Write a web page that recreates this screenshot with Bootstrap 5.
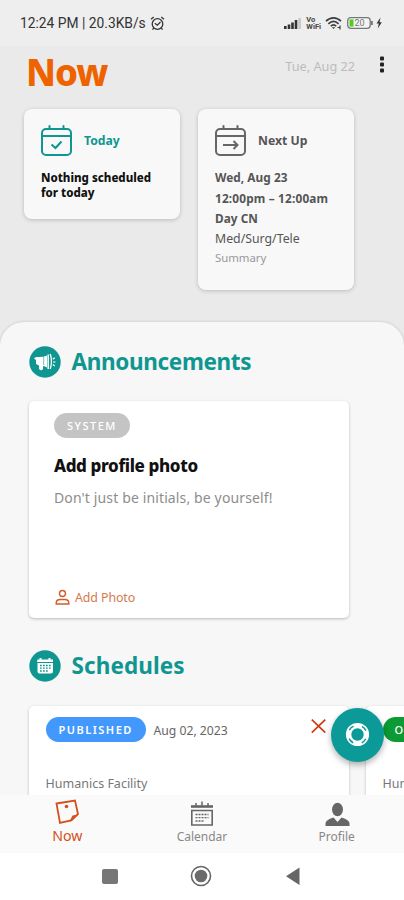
<!DOCTYPE html>
<html lang="en">
<head>
<meta charset="utf-8">
<meta name="viewport" content="width=device-width, initial-scale=1">
<title>Now</title>
<link rel="stylesheet" href="https://cdn.jsdelivr.net/npm/bootstrap@5.3.0/dist/css/bootstrap.min.css">
<style>
:root{--teal:#0f9691;--orange:#d4511c}
body{margin:0;background:#eaeaea;font-family:"Noto Sans","Open Sans",sans-serif;color:#111}
svg{display:block;flex:none}
.screen{height:900px;overflow:hidden}
.statusbar{height:46px;padding:0 20px;background:#eeeeee;font:13.8px/46px Roboto,sans-serif;color:#333}
.vowifi{font:bold 7.5px/7.5px Roboto,sans-serif;color:#444}
.topbar{height:63px;padding:0 15px 0 26px}
.page-name{font-size:36.5px;line-height:53px;font-weight:800;color:#ee6300;letter-spacing:-1px}
.date{font-size:12.7px;line-height:40px;color:#bcbcbc}
.menu-dots{margin:0 2px 0 22px}
.agenda{height:213px;padding:0 24px;gap:18px}
.tile{width:156px;background:#f8f8f8;border-radius:8px;box-shadow:0 1px 4px rgba(0,0,0,.2);padding:15px 0 0 17px}
.tile-today{height:110px}
.tile-next{height:181px;color:#555}
.tile-label{font-size:12.2px;font-weight:700;padding-top:2px}
.tile-text{font-size:11.5px;font-weight:800;line-height:15px;margin-top:13px}
.shift{font-size:11.8px;line-height:20.5px;font-weight:700;margin-top:10px;letter-spacing:.05px}
.shift .hours{letter-spacing:.18px}
.shift .unit{font-weight:400;line-height:20px;font-size:12.3px;letter-spacing:0}
.shift .note{font-weight:400;line-height:17px;color:#999;font-size:11.4px;letter-spacing:-.05px}
.teal{color:var(--teal)}
.sheet{height:473px;background:#f7f7f7;border-radius:24px 24px 0 0;box-shadow:0 0 3px rgba(0,0,0,.18);padding:24px 0 0 29px;overflow:hidden}
.section-name{font-size:22.5px;font-weight:700;line-height:32px;color:var(--teal);margin:0 0 0 10.5px;letter-spacing:.1px}
.section-news{letter-spacing:-.35px}
.panel{width:320px;flex:none;background:#fff;border-radius:5px;box-shadow:0 1px 3px rgba(0,0,0,.25)}
.panel-news{height:217px;margin-top:23px;padding:12px 25px 11px}
.pill{height:25px;border-radius:13px;color:#fff;font-size:11px;font-weight:500;line-height:26px;letter-spacing:1.5px;padding:0 13px}
.pill-system{background:#c4c4c4;width:76px}
.pill-published{background:#4298fc;width:100px;font-weight:600}
.pill-open{background:#0b9a33;padding:0 12px}
.news-title{font-size:17px;font-weight:800;line-height:24px;margin-top:16px;letter-spacing:-.38px}
.news-text{font-size:14px;line-height:20px;color:#8d8d8d;margin-top:10px;letter-spacing:.13px}
.add-photo{font-size:12.4px;line-height:18px;color:#d67950;text-decoration:none;letter-spacing:-.1px}
.schedule-row{gap:17px;margin-top:24px}
.panel-schedule{height:130px;padding:11px 16.5px}
.sub{font-size:12.2px;color:#666;padding-top:5px}
.facility{margin-top:32px;line-height:20px;font-size:12.5px;color:#777}
.fab{position:absolute;left:331px;top:708px;width:53px;height:54px;border-radius:50%;background:#0b9a98;box-shadow:0 3px 6px rgba(0,0,0,.3);border:0;padding:0}
.tabs{height:58px;background:#fafafa;padding-top:4px}
.tab-link{width:33.333%;color:#888;font-size:12px;line-height:20px;text-decoration:none}
.tab-now{color:var(--orange);font-size:14.2px}
.tab-now svg{margin-bottom:1px}
.system{height:47px;background:#fff}
</style>
<script src="https://cdn.jsdelivr.net/npm/bootstrap@5.3.0/dist/js/bootstrap.bundle.min.js"></script>
</head>
<body>
<div class="screen position-relative d-flex flex-column">
  <div class="statusbar d-flex align-items-center">
    <span>12:24 PM | 20.3KB/s</span>
    <svg class="ms-1" width="15" height="15" viewBox="0 0 15 15" fill="none" stroke="#333" stroke-width="1.3"><circle cx="7.5" cy="8" r="5.3"/><path d="M1 3.2 3.7 1M14 3.2 11.3 1M3.7 12 2.5 13.7M11.3 12l1.2 1.7M4.8 7.2l2.5 2L10.5 6"/></svg>
    <svg class="ms-auto" width="18" height="12" viewBox="0 0 18 12"><path fill="#333" d="M0 9h2.6v3H0zM3.7 7.5h2.6V12H3.7zM7.2 5.5h2.6V12H7.2zM10.7 3h2.6v9h-2.6z"/><path fill="#c7c7c7" d="M14.3 1h2.6v11h-2.6z"/></svg>
    <span class="vowifi ms-1">Vo<br>WiFi</span>
    <svg class="ms-1" width="17" height="14" viewBox="0 0 17 14" fill="none" stroke="#3d3d3d" stroke-width="1.7"><path d="M1 5.2c4.5-4.5 10.5-4.5 15 0M3.4 7.8c3.2-3.1 7-3.1 10.200 0M5.800 10.200c1.700-1.600 3.700-1.600 5.400 0"/><path d="m6.700 11.200 1.800 1.900 1.800-1.900z" fill="#3d3d3d" stroke="none"/><path d="M12.500 11.500h3M15 9.500v4" stroke-width="1.200"/></svg>
    <svg class="ms-1" width="38" height="14" viewBox="0 0 38 14"><rect x="1.700" y="1.700" width="22.500" height="10.600" rx="3" fill="#f4f4f4" stroke="#777" stroke-width="1.300"/><path d="M25 5h1.800v4H25z" fill="#777"/><rect x="3.500" y="3.400" width="4" height="7.200" fill="#4ed01c"/><text x="8.500" y="10.400" font-size="9" fill="#777">20</text><path d="M34.500 1.500 30.500 7.500h2.300l-1 5 4-6.300h-2.300z" fill="#333"/></svg>
  </div>
  <header class="topbar d-flex align-items-start">
    <div class="page-name">Now</div>
    <div class="date ms-auto">Tue, Aug 22</div>
    <svg class="menu-dots" width="10" height="38" viewBox="0 0 10 38" fill="#222"><rect x="3" y="10.500" width="4" height="4" rx="1"/><rect x="3" y="16.500" width="4" height="4" rx="1"/><rect x="3" y="22.500" width="4" height="4" rx="1"/></svg>
  </header>
  <section class="agenda d-flex align-items-start">
    <div class="tile tile-today">
      <div class="d-flex align-items-center gap-2 teal">
        <svg width="31" height="33" viewBox="0 0 31 33" fill="none" stroke="currentColor" stroke-width="2"><rect x="1" y="5" width="29" height="26" rx="4"/><path d="M1 12h29M8.500 5V2M22.500 5V2" stroke-linecap="round"/><path d="m10.500 20.500 4 3.500 6-6.500"/></svg>
        <span class="tile-label ms-1">Today</span>
      </div>
      <div class="tile-text">Nothing scheduled<br>for today</div>
    </div>
    <div class="tile tile-next">
      <div class="d-flex align-items-center gap-2">
        <svg width="31" height="33" viewBox="0 0 31 33" fill="none" stroke="#666" stroke-width="2"><rect x="1" y="5" width="29" height="26" rx="4"/><path d="M1 12h29M8.500 5V2M22.500 5V2" stroke-linecap="round"/><path d="M8 21h14M18.500 17l4 4-4 4"/></svg>
        <span class="tile-label ms-1">Next Up</span>
      </div>
      <div class="shift">
        <div>Wed, Aug 23</div><div class="hours">12:00pm – 12:00am</div><div>Day CN</div>
        <div class="unit">Med/Surg/Tele</div><div class="note">Summary</div>
      </div>
    </div>
  </section>
  <main class="sheet">
    <div class="d-flex align-items-center">
      <svg width="32" height="32" viewBox="0 0 32 32"><circle cx="16" cy="16" r="15.700" fill="#0f9691"/><path d="M5 12.500q.5-1.500 3-1.500 6 .5 10-1.500v12q-2-1.500-4-1.600v3q-1.800 2.500-4 0v-3.400L7 18v-4z" fill="#fff"/><path d="M14.700 11v8" stroke="#0f9691" stroke-width=".6"/><path d="M19.200 8.500v14.500" stroke="#fff" stroke-width="1.500"/><path d="M21.300 8q2.200 7.500 0 15" stroke="#fff" stroke-width="1.300" fill="none"/><path d="m23.800 13.200 2-1.500M24 16h2.500M23.800 18.500l2 1.500" stroke="#fff" stroke-width="1.200"/></svg>
      <h2 class="section-name section-news">Announcements</h2>
    </div>
    <article class="panel panel-news d-flex flex-column">
      <div class="pill pill-system">SYSTEM</div>
      <div class="news-title">Add profile photo</div>
      <div class="news-text">Don't just be initials, be yourself!</div>
      <a class="add-photo mt-auto d-flex align-items-center" href="#">
        <svg class="me-1" width="17" height="18" viewBox="0 0 17 18" fill="none" stroke="#d25b2b" stroke-width="1.400"><circle cx="8.500" cy="4.500" r="3"/><path d="M2.200 15v-1q0-3.500 4-3.500h4.600q4 0 4 3.500v1z"/></svg>Add Photo</a>
    </article>
    <div class="d-flex align-items-center mt-3 pt-3">
      <svg width="32" height="32" viewBox="0 0 32 32"><circle cx="16" cy="16" r="15.700" fill="#0f9691"/><path d="M8.500 9.500h2V8h2v1.500h7V8h2v1.500h2.500V12h-16zM8.500 13h15.500v8.500q0 2-2 2H10.500q-2 0-2-2z" fill="#fff"/><path d="M11 15.500h11M11 18.200h11M11 21h8" stroke="#0f9691" stroke-width="1.300" stroke-dasharray="1.700 1.300"/></svg>
      <h2 class="section-name">Schedules</h2>
    </div>
    <div class="schedule-row d-flex">
      <article class="panel panel-schedule">
        <div class="d-flex align-items-start">
          <div class="pill pill-published">PUBLISHED</div>
          <div class="sub ms-2">Aug 02, 2023</div>
          <svg class="ms-auto me-1" width="18" height="18" viewBox="0 0 18 18"><path d="m.8 2.700 13.500 13M14.300 2.700.8 15.700" stroke="#cf3b13" stroke-width="1.700"/></svg>
        </div>
        <div class="facility">Humanics Facility</div>
      </article>
      <article class="panel panel-schedule">
        <div class="d-flex"><div class="pill pill-open">OPEN</div></div>
        <div class="facility">Humanics Facility</div>
      </article>
    </div>
  </main>
  <nav class="tabs d-flex text-center">
    <a class="tab-link tab-now d-flex flex-column align-items-center" href="#">
      <svg width="26" height="26" viewBox="0 0 26 26" fill="none" stroke="currentColor" stroke-width="1.800"><path d="m2.500 4.500 18.500-3 3 13.500-7 6.500L6 24z"/><path d="m24.500 15.500-6.500 6.500-2.500.5 3-6z" fill="currentColor" stroke="none"/><circle cx="12.500" cy="7.500" r="1.800" fill="currentColor" stroke="none"/></svg>Now</a>
    <a class="tab-link d-flex flex-column align-items-center" href="#">
      <svg width="26" height="28" viewBox="0 0 26 28" fill="none" stroke="#666"><path d="M2 7.500h22" stroke-width="2.600"/><path d="M7 8V4M13 8V2.500M19 8V4" stroke-width="1.500"/><path d="M2.800 11.500h20.400v14.500H2.800z" stroke-width="1.600"/><path d="M6.500 15.500h13M6.500 18.700h13M6.500 22h9" stroke-width="1.300" stroke-dasharray="2 1"/></svg>Calendar</a>
    <a class="tab-link d-flex flex-column align-items-center" href="#">
      <svg width="26" height="28" viewBox="0 0 26 28" fill="#666"><ellipse cx="13.500" cy="10.500" rx="5.500" ry="6.800"/><path d="M1.500 27v-2.500q0-3.500 8-6l4 4.500 4-4.500q8 2.500 8 6V27z"/></svg>Profile</a>
  </nav>
  <div class="system d-flex">
    <svg width="404" height="47" viewBox="0 0 404 47"><rect x="102" y="16" width="16" height="15" rx="2" fill="#777"/><circle cx="201" cy="23" r="9.500" fill="none" stroke="#666" stroke-width="1.600"/><circle cx="201" cy="23" r="6.300" fill="#6b6b6b"/><path d="M286 23.200 299.500 14.500v17.500z" fill="#666"/></svg>
  </div>
  <button class="fab" type="button" aria-label="Help">
    <svg width="53" height="54" viewBox="0 0 53 54" fill="none"><circle cx="26.500" cy="26.500" r="8.900" stroke="#fff" stroke-width="5.400"/><circle cx="26.500" cy="26.500" r="9.300" stroke="#0b9a98" stroke-width="1.500" stroke-dasharray="5.800 8.808" stroke-dashoffset="-4.400"/></svg>
  </button>
</div>
</body>
</html>
